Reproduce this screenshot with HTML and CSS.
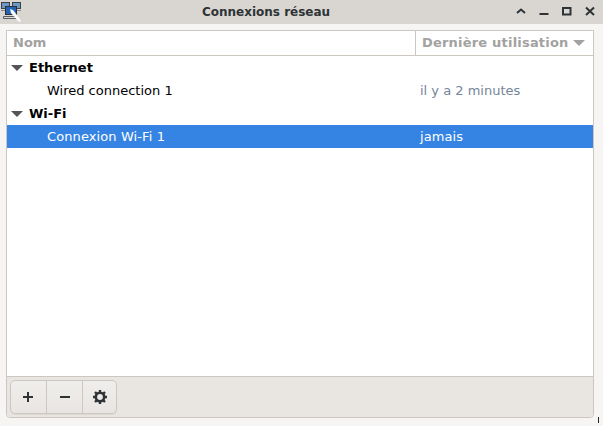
FILE: index.html
```html
<!DOCTYPE html>
<html lang="fr">
<head>
    <meta charset="UTF-8">
    <title>Connexions réseau</title>
    <link rel="stylesheet" href="styles.css">
</head>
<body>
    <div class="window">
        <header class="titlebar">
            <svg class="app-icon" width="22" height="22" viewBox="0 0 22 22">
                <rect x="1.500" y="1.500" width="8" height="6" fill="#6f97c4" stroke="#3c4248"/>
                <rect x="12.500" y="1.500" width="8" height="6" fill="#6f97c4" stroke="#3c4248"/>
                <path d="M1 9.500h9M12 9.500h9" stroke="#8a8d90"/>
                <rect x="5.500" y="5.500" width="11" height="8" fill="#2463b4" stroke="#2b3036"/>
                <path d="M3.500 15.500h14v2h-14z" fill="#d8d8d6" stroke="#5a5e62"/>
                <path d="M10 8l3 1 7 9 1 3-3-1-7-8z" fill="#fcfcfc"/>
            </svg>
            <h1 class="title">Connexions réseau</h1>
            <div class="wm-buttons">
                <svg width="14" height="14" viewBox="0 0 14 14"><path d="M3 8l4-3.500 4 3.500" fill="none" stroke="#2e3436" stroke-width="2"/></svg>
                <svg width="14" height="14" viewBox="0 0 14 14"><path d="M2.500 9h9" stroke="#2e3436" stroke-width="2"/></svg>
                <svg width="14" height="14" viewBox="0 0 14 14"><rect x="3" y="3" width="7.500" height="6.500" fill="none" stroke="#2e3436" stroke-width="2"/></svg>
                <svg width="14" height="14" viewBox="0 0 14 14"><path d="M3 2.500l8 7.500M11 2.500l-8 7.500" stroke="#2e3436" stroke-width="2"/></svg>
            </div>
        </header>

        <main class="content">
            <div class="panel">
                <div class="list">
                    <div class="list-head">
                        <div class="col-name">Nom</div>
                        <div class="col-used">Dernière utilisation<span class="sort-arrow"></span></div>
                    </div>
                    <div class="row group"><span class="expander"></span>Ethernet</div>
                    <div class="row"><span class="col-name">Wired connection 1</span><span class="col-used muted">il y a 2 minutes</span></div>
                    <div class="row group"><span class="expander"></span>Wi-Fi</div>
                    <div class="row selected"><span class="col-name">Connexion Wi-Fi 1</span><span class="col-used">jamais</span></div>
                </div>
                <div class="toolbar">
                    <div class="btn-group">
                        <button class="btn" aria-label="Ajouter">
                            <svg width="16" height="16" viewBox="0 0 16 16"><path d="M8 3v10M3 8h10" stroke="#2e3436" stroke-width="2"/></svg>
                        </button>
                        <button class="btn" aria-label="Supprimer">
                            <svg width="16" height="16" viewBox="0 0 16 16"><path d="M3 8h10" stroke="#2e3436" stroke-width="2"/></svg>
                        </button>
                        <button class="btn" aria-label="Préférences">
                            <svg width="16" height="16" viewBox="0 0 16 16">
                                <circle cx="8" cy="8" r="4.200" fill="none" stroke="#2e3436" stroke-width="2.600"/>
                                <path d="M8 1v3M8 12v3M1 8h3M12 8h3M3 3l2.200 2.200M10.800 10.800l2.200 2.200M13 3l-2.200 2.200M5.200 10.800l-2.200 2.200" stroke="#2e3436" stroke-width="2.400"/>
                            </svg>
                        </button>
                    </div>
                </div>
            </div>
        </main>
    </div>
    <div class="cursor"></div>
</body>
</html>
```

FILE: styles.css
```css
html, body {
    margin: 0;
    padding: 0;
    height: 100%;
}

body {
    font-family: "DejaVu Sans", sans-serif;
    font-size: 13px;
    color: #000;
    background: #f6f5f4;
}

.window {
    display: flex;
    flex-direction: column;
    height: 426px;
}

/* Title bar */
.titlebar {
    display: flex;
    align-items: center;
    height: 24px;
    flex: none;
    background: #d9d6d2;
}

.app-icon {
    flex: none;
}

.title {
    flex: 1;
    margin: 0;
    padding-right: 4px;
    text-align: center;
    font-size: 12px;
    font-weight: bold;
    color: #2e3436;
}

.wm-buttons {
    display: flex;
    gap: 9px;
    margin-right: 6px;
}

/* Main panel */
.content {
    flex: 1;
    display: flex;
    padding: 6px 9px 8px 6px;
    min-height: 0;
}

.panel {
    flex: 1;
    display: flex;
    flex-direction: column;
    border: 1px solid #cdc7c2;
    border-radius: 0 0 4px 4px;
}

.list {
    flex: 1;
    background: #fff;
}

.list-head {
    display: flex;
    height: 24px;
    border-bottom: 1px solid #cdc7c2;
    font-weight: bold;
    color: #a2a2a0;
    line-height: 24px;
}

.list-head .col-name {
    padding-left: 6px;
}

.list-head .col-used {
    display: flex;
    align-items: center;
    width: 178px;
    box-sizing: border-box;
    padding-left: 6px;
    border-left: 1px solid #cdc7c2;
    letter-spacing: 0.2px;
}

.col-name {
    flex: 1;
}

.col-used {
    width: 173px;
}

.sort-arrow {
    margin-left: 4px;
    border-left: 6px solid transparent;
    border-right: 6px solid transparent;
    border-top: 6px solid #a2a2a0;
}

.row {
    display: flex;
    align-items: center;
    height: 23px;
    padding-left: 40px;
}

.row.group {
    font-weight: bold;
    padding-left: 4px;
}

.expander {
    width: 0;
    height: 0;
    border-left: 6px solid transparent;
    border-right: 6px solid transparent;
    border-top: 6px solid #555;
    margin-right: 6px;
}

.row.selected {
    background: #3584e4;
    color: #fff;
    letter-spacing: 0.1px;
}

.muted {
    color: #76859a;
}

/* Bottom toolbar */
.toolbar {
    flex: none;
    display: flex;
    align-items: center;
    height: 40px;
    padding-left: 3px;
    background: #e9e5e1;
    border-top: 1px solid #cdc7c2;
    border-radius: 0 0 4px 4px;
}

.btn-group {
    display: flex;
    border: 1px solid #cdc7c2;
    border-radius: 5px;
    background: linear-gradient(#f0eeec, #e8e5e2);
    box-shadow: 0 1px 1px rgba(0, 0, 0, 0.06);
}

.btn {
    display: flex;
    align-items: center;
    justify-content: center;
    width: 36px;
    height: 32px;
    padding: 0;
    border: 0;
    border-left: 1px solid #cdc7c2;
    background: transparent;
}

.btn:first-child {
    width: 35px;
    padding-right: 1px;
    border-left: 0;
}

.btn:last-child {
    width: 34px;
}

/* Tip of the mouse pointer at the window corner */
.cursor {
    position: absolute;
    left: 598px;
    top: 417px;
    width: 1px;
    height: 6px;
    background: #222;
}
```
